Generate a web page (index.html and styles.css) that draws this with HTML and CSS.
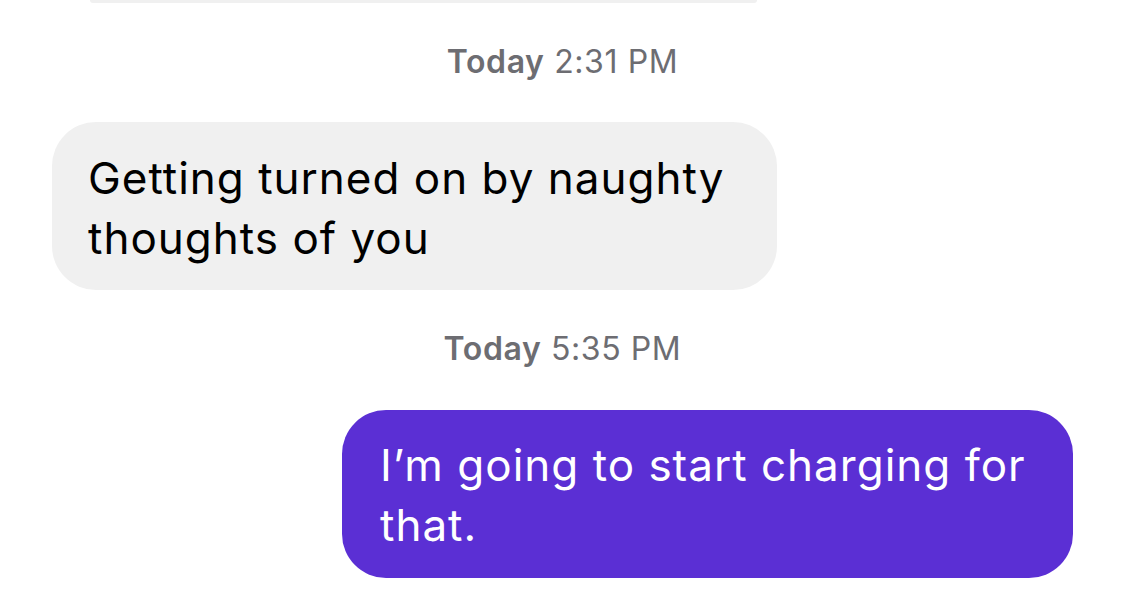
FILE: index.html
```html
<!DOCTYPE html>
<html lang="en">
<head>
    <meta charset="UTF-8">
    <meta name="viewport" content="width=device-width, initial-scale=1.0">
    <title>Messages</title>
    <link rel="stylesheet" href="styles.css">
</head>
<body>
    <div id="thread">
        <div class="bubble-tail-edge"></div>

        <div class="stamp"><b>Today</b> 2:31 PM</div>
        <div class="bubble incoming">Getting turned on by naughty thoughts of you</div>

        <div class="stamp stamp-second"><b>Today</b> 5:35 PM</div>
        <div class="bubble outgoing">I&#8217;m going to start charging for that.</div>
    </div>
</body>
</html>
```

FILE: styles.css
```css
body, html {
    margin: 0;
    padding: 0;
    height: 100%;
    overflow: hidden;
    background-color: #fff;
}
#thread {
    display: flex;
    flex-direction: column;
    width: 1125px;
    font-family: Inter, "Liberation Sans", sans-serif;
}
/* bottom of the previous bubble, scrolled off the top */
.bubble-tail-edge {
    height: 3px;
    width: 667px;
    margin-left: 90px;
    background: #f0f0f0;
    border-radius: 0 0 3px 3px;
}
.stamp {
    margin-top: 40px;
    text-align: center;
    font-size: 32px;
    line-height: 38px;
    letter-spacing: 0.6px;
    color: #6d6d72;
}
.stamp b {
    font-weight: 600;
}
.stamp-second {
    margin-top: 40px;
}
.bubble {
    font-size: 44px;
    line-height: 60px;
    letter-spacing: 1px;
    border-radius: 44px;
    box-sizing: border-box;
}
.incoming {
    margin-top: 41px;
    margin-left: 52px;
    width: 725px;
    padding: 26px 36px 22px 36px;
    background: #f0f0f0;
    color: #000;
}
.outgoing {
    align-self: flex-end;
    margin-top: 42px;
    margin-right: 52px;
    width: 731px;
    padding: 25px 38px 23px 38px;
    background: #5b2fd4;
    color: #fff;
}
```
